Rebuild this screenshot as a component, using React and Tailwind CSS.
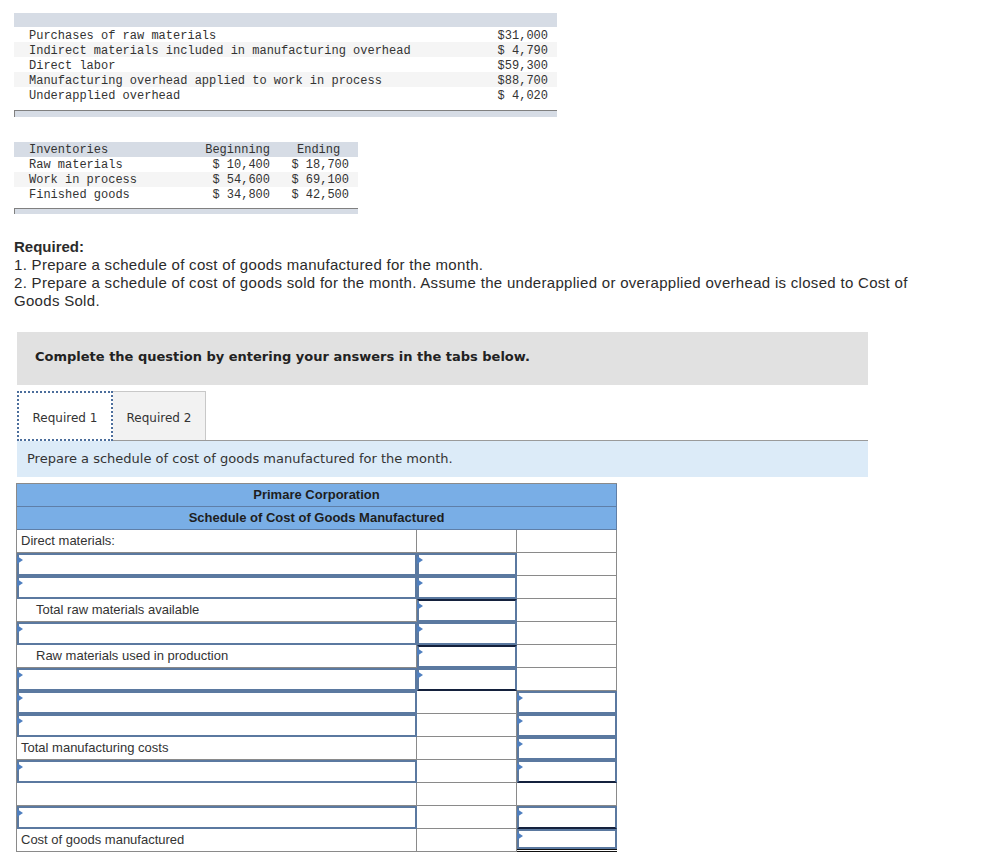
import React from 'react';

const costs = [
  ['Purchases of raw materials', '$31,000'],
  ['Indirect materials included in manufacturing overhead', '$ 4,790'],
  ['Direct labor', '$59,300'],
  ['Manufacturing overhead applied to work in process', '$88,700'],
  ['Underapplied overhead', '$ 4,020'],
];

const inventories = [
  ['Raw materials', '$ 10,400', '$ 18,700'],
  ['Work in process', '$ 54,600', '$ 69,100'],
  ['Finished goods', '$ 34,800', '$ 42,500'],
];

// cell kinds: 'text', 'plain', 'input'
// extra flags: topDark, bottomDark, doubleBottom, indent
const rows = [
  [{ t: 'text', label: 'Direct materials:' }, { t: 'plain' }, { t: 'plain' }],
  [{ t: 'input' }, { t: 'input' }, { t: 'plain' }],
  [{ t: 'input' }, { t: 'input' }, { t: 'plain' }],
  [{ t: 'text', label: 'Total raw materials available', indent: true }, { t: 'input', topDark: true }, { t: 'plain' }],
  [{ t: 'input' }, { t: 'input' }, { t: 'plain' }],
  [{ t: 'text', label: 'Raw materials used in production', indent: true }, { t: 'input', topDark: true }, { t: 'plain' }],
  [{ t: 'input' }, { t: 'input', bottomDark: true }, { t: 'plain' }],
  [{ t: 'input' }, { t: 'plain' }, { t: 'input' }],
  [{ t: 'input' }, { t: 'plain' }, { t: 'input' }],
  [{ t: 'text', label: 'Total manufacturing costs' }, { t: 'plain' }, { t: 'input' }],
  [{ t: 'input' }, { t: 'plain' }, { t: 'input', bottomDark: true }],
  [{ t: 'plain' }, { t: 'plain' }, { t: 'plain' }],
  [{ t: 'input' }, { t: 'plain' }, { t: 'input', bottomDark: true }],
  [{ t: 'text', label: 'Cost of goods manufactured' }, { t: 'plain' }, { t: 'input', doubleBottom: true }],
];

const Arrow = () => (
  <span className="absolute left-[-2px] top-[1px] w-0 h-0 border-y-[4px] border-y-transparent border-l-[6px] border-l-[#4f7fbf]" />
);

const Cell = ({ cell }) => {
  if (cell.t === 'input') {
    let cls = 'relative h-[23px] border-2 border-[#5b79a0] bg-white';
    if (cell.topDark) cls += ' border-t-[#14213d]';
    if (cell.bottomDark) cls += ' border-b-[#14213d]';
    if (cell.doubleBottom) {
      return (
        <div className="h-[23px] border-b-[3px] border-double border-[#111]">
          <div className="relative h-[20px] border-2 border-[#5b79a0] bg-white">
            <Arrow />
          </div>
        </div>
      );
    }
    return (
      <div className={cls}>
        <Arrow />
      </div>
    );
  }
  return (
    <div className={`h-[23px] border-r border-b border-[#8a8a8a] bg-white text-[13px] leading-[22px] text-[#333] ${cell.indent ? 'pl-[19px]' : 'pl-[4px]'}`}>
      {cell.label}
    </div>
  );
};

const App = () => {
  return (
    <div className="w-[999px] min-h-[859px] bg-white pb-[10px]" style={{ fontFamily: '"Liberation Sans", Arial, sans-serif' }}>
      {/* Given data */}
      <div className="ml-[14px] pt-[13px] w-[543px] text-[12px] text-[#333]" style={{ fontFamily: '"Liberation Mono", monospace' }}>
        <div className="h-[14px] bg-[#d6dce5]" />
        {costs.map(([label, value], i) => (
          <div key={label} className={`flex justify-between pl-[15px] pr-[9px] h-[15px] pt-[3px] leading-[12px] ${i % 2 === 1 ? 'bg-[#f5f5f5]' : 'bg-white'}`}>
            <span>{label}</span>
            <span className="whitespace-pre">{value}</span>
          </div>
        ))}
        <div className="h-[8px]" />
        <div className="h-[7px] bg-[#d6dce5] border-t border-l border-[#808080]" />
      </div>

      <div className="ml-[14px] mt-[25px] w-[344px] text-[12px] text-[#333]" style={{ fontFamily: '"Liberation Mono", monospace' }}>
        <div className="grid grid-cols-[186px_72px_86px] h-[15px] pt-[2px] leading-[12px] bg-[#d6dce5]">
          <span className="pl-[15px]">Inventories</span>
          <span className="text-right pr-[2px]">Beginning</span>
          <span className="pl-[25px]">Ending</span>
        </div>
        {inventories.map(([label, b, e], i) => (
          <div key={label} className={`grid grid-cols-[186px_72px_86px] h-[15px] pt-[2px] leading-[12px] ${i % 2 === 1 ? 'bg-[#f5f5f5]' : 'bg-white'}`}>
            <span className="pl-[15px]">{label}</span>
            <span className="text-right pr-[2px] whitespace-pre">{b}</span>
            <span className="text-right pr-[9px] whitespace-pre">{e}</span>
          </div>
        ))}
        <div className="h-[6px]" />
        <div className="h-[6px] bg-[#d6dce5] border-t border-l border-[#808080]" />
      </div>

      {/* Required */}
      <div className="ml-[14px] mt-[24px] w-[910px] text-[15px] leading-[18px] tracking-[0.3px] text-[#2b2b2b]">
        <p className="font-bold tracking-normal">Required:</p>
        <p>1. Prepare a schedule of cost of goods manufactured for the month.</p>
        <p>2. Prepare a schedule of cost of goods sold for the month. Assume the underapplied or overapplied overhead is closed to Cost of Goods Sold.</p>
      </div>

      {/* Instructions box */}
      <div className="ml-[17px] mt-[22px] w-[851px] h-[53px] bg-[#e1e1e1] flex items-center pl-[18px] pb-[4px] text-[13px] font-bold text-[#222]" style={{ fontFamily: '"DejaVu Sans", Verdana, sans-serif' }}>
        Complete the question by entering your answers in the tabs below.
      </div>

      {/* Tabs */}
      <div className="ml-[17px] mt-[6px] w-[851px]" style={{ fontFamily: '"DejaVu Sans", Verdana, sans-serif' }}>
        <div className="flex h-[50px] border-b border-[#9a9a9a]">
          <div className="w-[96px] h-[50px] pt-[3px] border-2 border-dotted border-[#4c6e9c] bg-white flex items-center justify-center text-[12px] text-[#333]">
            Required 1
          </div>
          <div className="w-[93px] h-[49px] pt-[3px] border-t border-r border-[#c8c8c8] bg-[#f2f2f2] flex items-center justify-center text-[12px] text-[#333]">
            Required 2
          </div>
        </div>
        <div className="h-[36px] bg-[#dcebf8] flex items-center pl-[10px] pb-[1px] text-[13px] text-[#333]">
          Prepare a schedule of cost of goods manufactured for the month.
        </div>
      </div>

      {/* Schedule */}
      <div className="ml-[16px] mt-[6px] w-[601px] border-l border-t border-[#8a8a8a]">
        <div className="h-[23px] bg-[#79aee6] border-r border-b border-[#5f7fa8] text-center text-[13px] font-bold leading-[22px] text-[#1e1e1e]">
          Primare Corporation
        </div>
        <div className="h-[23px] bg-[#79aee6] border-r border-b border-[#5f7fa8] text-center text-[13px] font-bold leading-[22px] text-[#1e1e1e]">
          Schedule of Cost of Goods Manufactured
        </div>
        {rows.map((row, i) => (
          <div key={i} className="grid grid-cols-[400px_100px_100px]">
            {row.map((cell, j) => (
              <Cell key={j} cell={cell} />
            ))}
          </div>
        ))}
      </div>
    </div>
  );
};

export default App;
